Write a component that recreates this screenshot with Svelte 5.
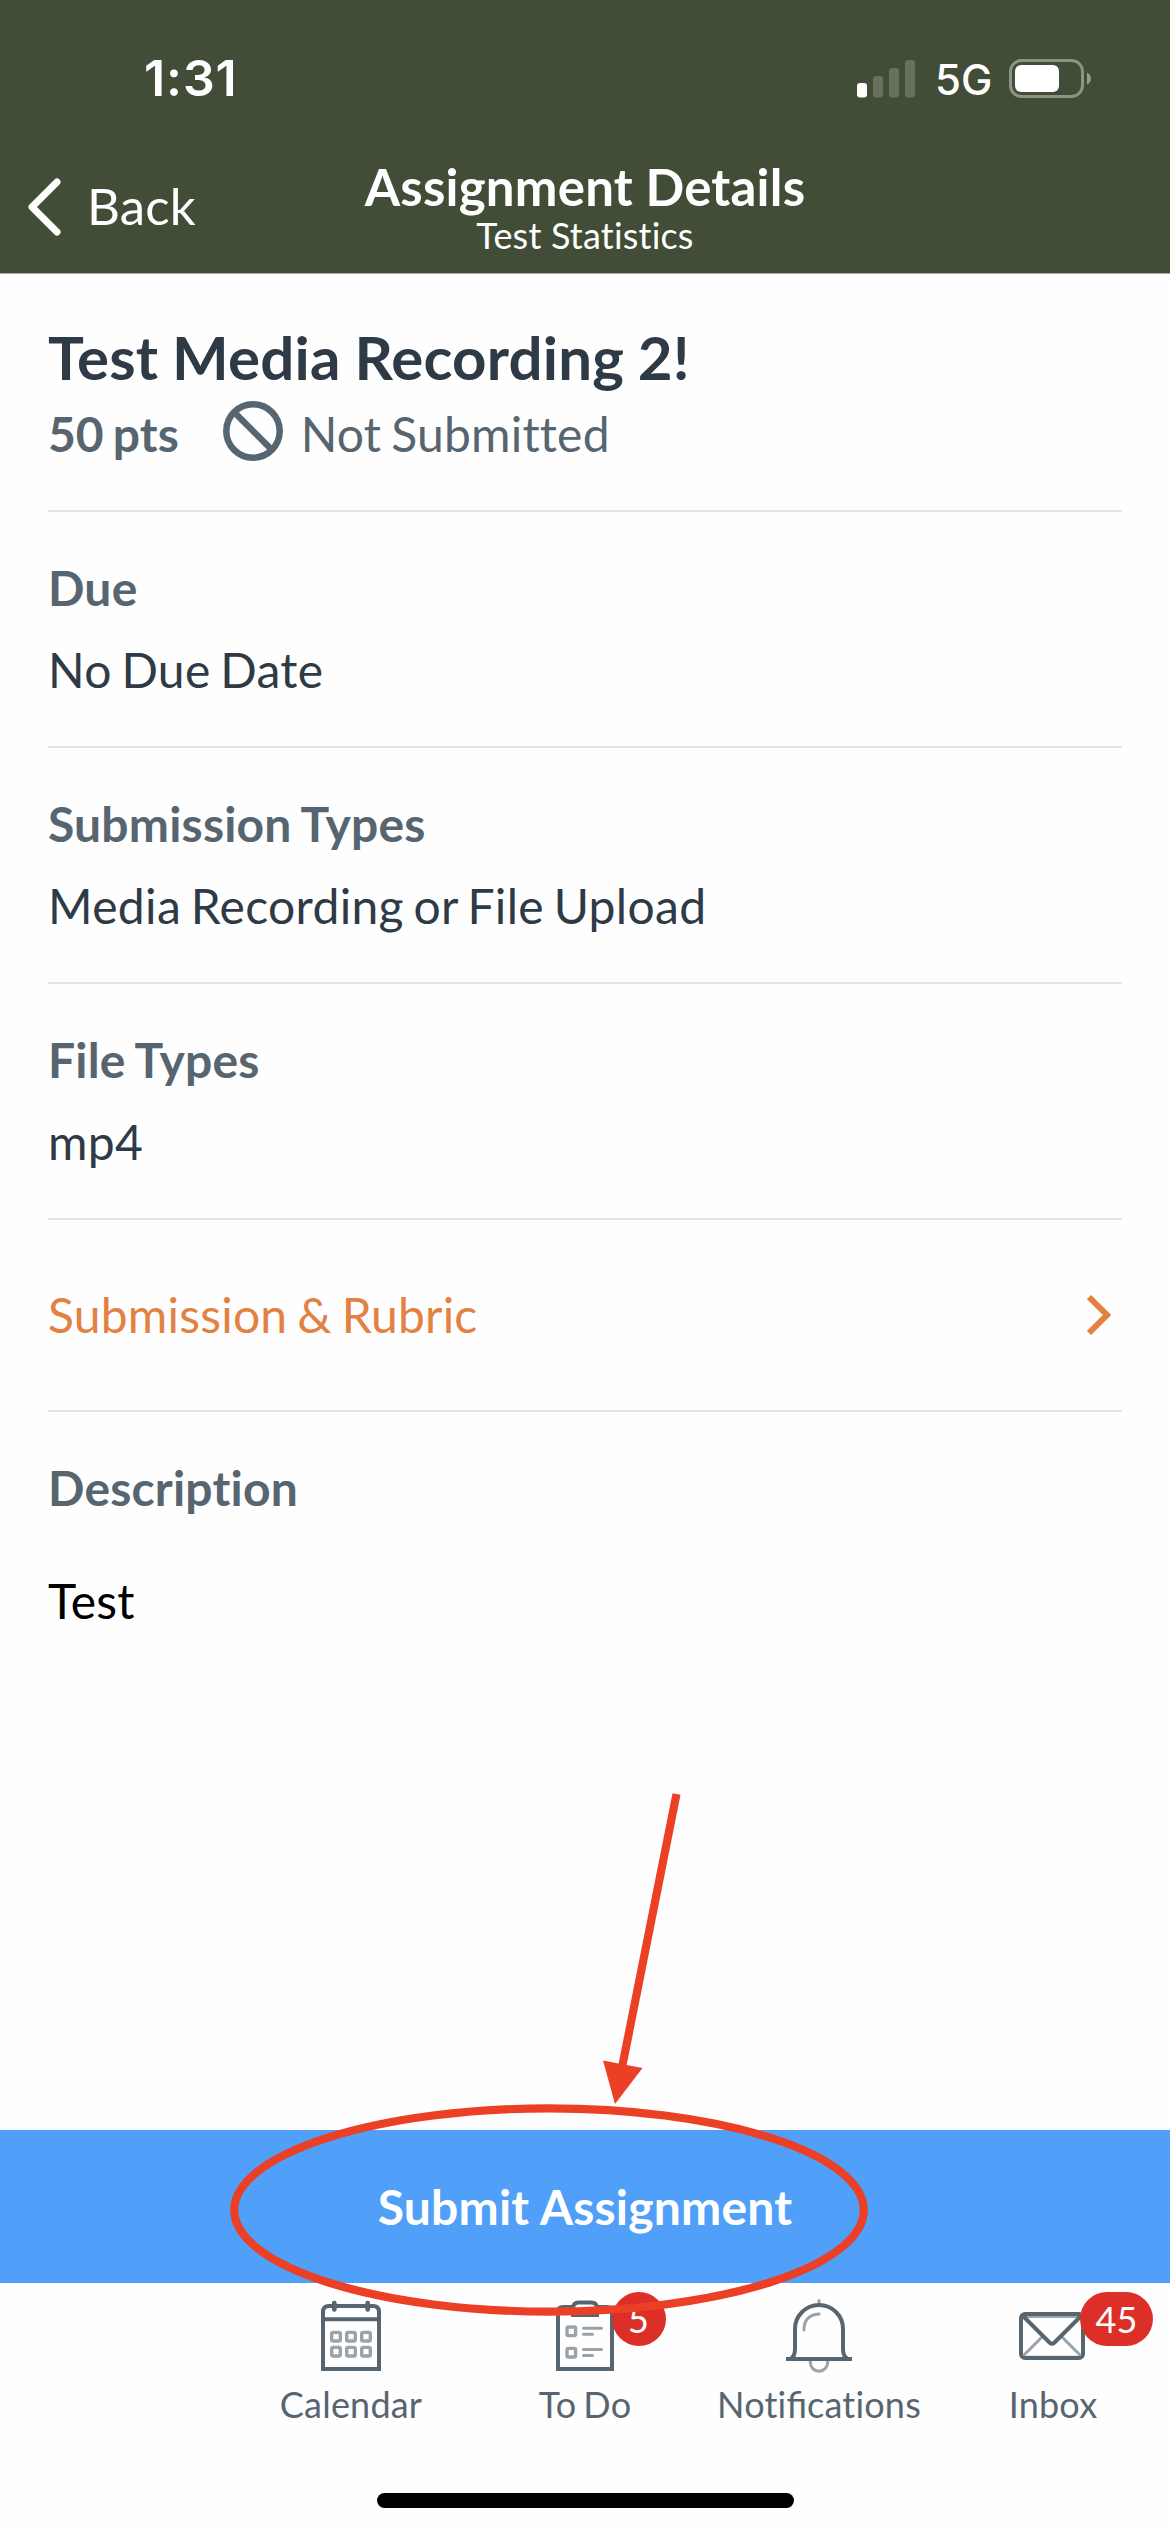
<script>
  const details = [
    { label: 'Due', value: 'No Due Date' },
    { label: 'Submission Types', value: 'Media Recording or File Upload' },
    { label: 'File Types', value: 'mp4' }
  ];
  const tabs = [
    { name: 'Calendar', icon: 'calendar' },
    { name: 'To Do', icon: 'todo', badge: '5' },
    { name: 'Notifications', icon: 'bell' },
    { name: 'Inbox', icon: 'inbox', badge: '45' }
  ];
</script>

<div class="screen">
  <header>
    <div class="status">
      <span class="time">1:31</span>
      <div class="indicators">
        <svg class="signal" width="58" height="38" viewBox="0 0 58 38" fill="#fff">
          <rect x="0" y="23" width="10" height="14.5" rx="3" />
          <g opacity="0.2">
            <rect x="16" y="16" width="10" height="21.5" rx="3" />
            <rect x="32" y="8" width="10" height="29.5" rx="3" />
            <rect x="48" y="0" width="10" height="37.5" rx="3" />
          </g>
        </svg>
        <span class="network">5G</span>
        <svg class="battery" width="82" height="39" viewBox="0 0 82 39">
          <rect x="1.5" y="1.5" width="72" height="36" rx="11" fill="none" stroke="#fff" stroke-width="3" opacity="0.4" />
          <rect x="6" y="6" width="44" height="27" rx="6" fill="#fff" />
          <path d="M78 13.5q4 2 4 6t-4 6z" fill="#fff" opacity="0.45" />
        </svg>
      </div>
    </div>
    <nav>
      <div class="back">
        <svg width="36" height="60" viewBox="0 0 36 60" fill="none" stroke="#fff" stroke-width="7" stroke-linecap="round" stroke-linejoin="round">
          <path d="M30 5 5 30l25 25" />
        </svg>
        <span>Back</span>
      </div>
      <div class="heading">
        <h1>Assignment Details</h1>
        <p>Test Statistics</p>
      </div>
    </nav>
  </header>

  <main>
    <section class="summary">
      <h2>Test Media Recording 2!</h2>
      <div class="meta">
        <b>50 pts</b>
        <svg width="60" height="60" viewBox="0 0 60 60" fill="none" stroke="#576570" stroke-width="6.5">
          <circle cx="30" cy="30" r="26.7" />
          <path d="M11.5 11.5l37 37" />
        </svg>
        <span>Not Submitted</span>
      </div>
    </section>
    {#each details as item}
      <section class="detail">
        <h3>{item.label}</h3>
        <p>{item.value}</p>
      </section>
    {/each}
    <section class="link">
      <span>Submission &amp; Rubric</span>
      <svg width="24" height="42" viewBox="0 0 24 42" fill="none" stroke="#e28142" stroke-width="6">
        <path d="M2 3l18 18L2 39" />
      </svg>
    </section>
    <section class="description">
      <h3>Description</h3>
      <p>Test</p>
    </section>
  </main>

  <div class="submit">Submit Assignment</div>

  <footer>
    <div class="tabs">
      <div class="tab"></div>
      {#each tabs as tab}
        <div class="tab">
          <svg class="icon" width="78" height="84" viewBox="0 0 78 84" fill="none" stroke="#576570" stroke-width="4">
            {#if tab.icon === 'calendar'}
              <path d="M11 74V17q0-6 6-6H61q6 0 6 6V74ZM11 24.3H67" />
              <path d="M22.3 8v6.5M55.7 8v6.5" stroke-width="4.7" stroke-linecap="round" />
              <g stroke="#9aa3aa" stroke-width="3.4">
                {#each [19.7, 34.7, 49.7] as x}
                  <rect {x} y="37.4" width="8.6" height="8.6" rx="1.5" />
                  <rect {x} y="52.4" width="8.6" height="8.6" rx="1.5" />
                {/each}
              </g>
            {:else if tab.icon === 'todo'}
              <path d="M26 12H17q-5 0-5 5V74H66V17q0-5-5-5H52" />
              <path d="M27 20v-6.500q0-6 6-6h12q6 0 6 6v6.500z" />
              <g stroke="#9aa3aa">
                <rect x="21" y="32" width="8.6" height="8.6" rx="1.5" stroke-width="3.4" />
                <rect x="21" y="53.4" width="8.6" height="8.6" rx="1.5" stroke-width="3.4" />
                <path d="M37.5 33.3h18M37.5 39.3h9M37.5 54.6h18M37.5 60.6h9" stroke-width="3" stroke-linecap="round" />
              </g>
            {:else if tab.icon === 'bell'}
              <g stroke="#9aa3aa" stroke-width="3" stroke-linecap="round">
                <path d="M39 5.5V9M30.3 66V67.5a8.7 8.7 0 0 0 17.4 0V66M24 35Q24 20 39 19" />
              </g>
              <path d="M6 64H72M10 64Q15 62 15 54V34a24 24 0 0 1 48 0V54Q63 62 68 64" />
            {:else}
              <path d="M28 42 10 60M48 42 66 60M9 62.3H67M9 21.5H67" stroke="#9aa3aa" stroke-width="3" />
              <rect x="7" y="19" width="62" height="44" rx="4" />
              <path d="M9 21 35.5 47.5q2.5 2.5 5 0L67 21" />
            {/if}
          </svg>
          <span class="name">{#each tab.name.split(/(fi)/) as part}{#if part === 'fi'}<span class="joined">{part}</span>{:else}{part}{/if}{/each}</span>
          {#if tab.badge}<em>{tab.badge}</em>{/if}
        </div>
      {/each}
    </div>
    <div class="home"></div>
  </footer>

  <svg class="annotation" width="1170" height="2532" viewBox="0 0 1170 2532" fill="none" stroke="#eb4025" stroke-width="8.2">
    <ellipse cx="549" cy="2210" rx="314.8" ry="101.6" />
    <path d="M676.5 1794 622.5 2065" />
    <path d="M603 2060.5 642.5 2068 615 2104z" fill="#eb4025" stroke="none" />
  </svg>
</div>

<style>
  :global(body) { background: #fff; }
  h1, h2, h3, p { margin: 0; }
  svg { display: block; flex: none; }
  .screen {
    position: relative;
    display: flex;
    flex-direction: column;
    width: 1170px;
    height: 2532px;
    overflow: hidden;
    background: #fefefe;
    font: 48px/58px Lato, sans-serif;
    font-variant-ligatures: none;
    letter-spacing: 0.2px;
    word-spacing: -2.5px;
    color: #2e3a45;
    white-space: nowrap;
  }
  header {
    height: 274px;
    box-sizing: border-box;
    border-bottom: 1px solid #a6ac9f;
    background: #414d36;
    color: #fff;
  }
  .status {
    display: flex;
    align-items: center;
    justify-content: space-between;
    height: 157px;
    padding: 0 79px 0 144px;
    box-sizing: border-box;
    font-family: Inter, sans-serif;
  }
  .time { margin-top: -1px; font-size: 50px; font-weight: 600; letter-spacing: 0.9px; }
  .indicators { display: flex; align-items: center; }
  .network { width: 55px; margin: 2px 19px 0 20px; font-size: 42px; font-weight: 450; letter-spacing: 0; }
  nav {
    display: grid;
    grid-template-columns: 1fr auto 1fr;
  }
  .back { display: flex; align-items: center; gap: 24px; height: 100px; padding-left: 27px; font-size: 51px; }
  .back span { margin-top: -2px; }
  .heading { padding-top: 1px; text-align: center; word-spacing: 0; }
  h1 { font-size: 51px; line-height: 58px; font-weight: 700; }
  .heading p { margin-top: -1px; font-size: 36px; line-height: 40px; }
  main { flex: 1; padding: 0 48px; }
  section { box-sizing: border-box; border-bottom: 2px solid #e3e4e4; }
  .summary { height: 238px; padding-top: 47px; }
  h2 { font-size: 60px; line-height: 72px; font-weight: 700; word-spacing: -1px; }
  .meta { display: flex; align-items: center; height: 60px; margin-top: 8px; color: #576570; }
  .meta b, .meta span { padding-top: 6px; }
  .meta b { letter-spacing: 0; }
  .meta svg { margin: 0 18px 0 44px; }
  h3 { font-size: 48px; line-height: 58px; font-weight: 700; color: #576570; word-spacing: -1.5px; }
  .detail { height: 236px; padding-top: 47px; }
  .detail p { margin-top: 24px; letter-spacing: 0.33px; word-spacing: -3px; }
  .link { display: flex; align-items: center; justify-content: space-between; height: 192px; padding-right: 11px; color: #e28142; }
  .description { padding-top: 47px; border: 0; }
  .description p { margin-top: 55px; color: #000; }
  .submit {
    height: 153px;
    padding-top: 48px;
    box-sizing: border-box;
    background: #509ff8;
    color: #fff;
    font-weight: 700;
    text-align: center;
    word-spacing: 0;
  }
  footer { height: 249px; }
  .tabs { display: grid; grid-template-columns: repeat(5, 1fr); height: 210px; }
  .tab {
    position: relative;
    display: flex;
    flex-direction: column;
    align-items: center;
    gap: 3px;
    padding-top: 12px;
    color: #576570;
    font-size: 36px;
    line-height: 44px;
  }
  .joined { font-variant-ligatures: normal; letter-spacing: 0; }
  .tab em {
    position: absolute;
    left: 143.5px;
    top: 9px;
    min-width: 54px;
    height: 54px;
    padding: 0 16px;
    box-sizing: border-box;
    border-radius: 27px;
    background: #dc2f28;
    color: #fff;
    font-style: normal;
    line-height: 55px;
    text-align: center;
    letter-spacing: 0;
  }
  .home { width: 417px; height: 15px; margin: 0 auto; border-radius: 8px; background: #000; }
  .annotation { position: absolute; inset: 0; pointer-events: none; }
</style>
